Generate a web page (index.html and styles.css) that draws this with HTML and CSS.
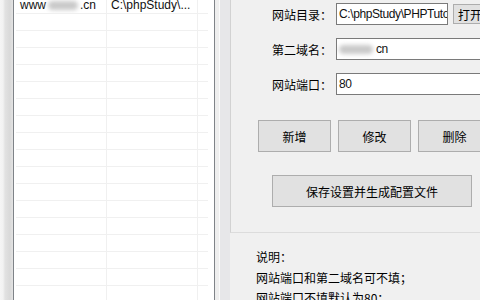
FILE: index.html
```html
<!DOCTYPE html>
<html lang="zh-CN">
<head>
  <meta charset="utf-8">
  <title>站点管理</title>
  <link rel="stylesheet" href="styles.css">
</head>
<body>
<div class="app">
  <div class="edge"></div>
  <div class="list">
    <div class="rows">
      <div class="row"><span class="cell c1">www<span class="blur"></span>.cn</span><span class="cell c2">C:\phpStudy\...</span><span class="cell c3"></span></div>
      <div class="row"><span class="cell c1"></span><span class="cell c2"></span><span class="cell c3"></span></div>
      <div class="row"><span class="cell c1"></span><span class="cell c2"></span><span class="cell c3"></span></div>
      <div class="row"><span class="cell c1"></span><span class="cell c2"></span><span class="cell c3"></span></div>
      <div class="row"><span class="cell c1"></span><span class="cell c2"></span><span class="cell c3"></span></div>
      <div class="row"><span class="cell c1"></span><span class="cell c2"></span><span class="cell c3"></span></div>
      <div class="row"><span class="cell c1"></span><span class="cell c2"></span><span class="cell c3"></span></div>
      <div class="row"><span class="cell c1"></span><span class="cell c2"></span><span class="cell c3"></span></div>
      <div class="row"><span class="cell c1"></span><span class="cell c2"></span><span class="cell c3"></span></div>
      <div class="row"><span class="cell c1"></span><span class="cell c2"></span><span class="cell c3"></span></div>
      <div class="row"><span class="cell c1"></span><span class="cell c2"></span><span class="cell c3"></span></div>
      <div class="row"><span class="cell c1"></span><span class="cell c2"></span><span class="cell c3"></span></div>
      <div class="row"><span class="cell c1"></span><span class="cell c2"></span><span class="cell c3"></span></div>
      <div class="row"><span class="cell c1"></span><span class="cell c2"></span><span class="cell c3"></span></div>
      <div class="row"><span class="cell c1"></span><span class="cell c2"></span><span class="cell c3"></span></div>
      <div class="row"><span class="cell c1"></span><span class="cell c2"></span><span class="cell c3"></span></div>
      <div class="row"><span class="cell c1"></span><span class="cell c2"></span><span class="cell c3"></span></div>
      <div class="row"><span class="cell c1"></span><span class="cell c2"></span><span class="cell c3"></span></div>
    </div>
  </div>
  <div class="track"></div>
  <div class="main">
    <div class="panel">
      <div class="field">
        <span class="label">网站目录：</span>
        <div class="textbox short">C:\phpStudy\PHPTutorial\WWW</div>
        <button class="btn open" type="button">打开</button>
      </div>
      <div class="field">
        <span class="label">第二域名：</span>
        <div class="textbox"><span class="blur wide"></span>cn</div>
      </div>
      <div class="field">
        <span class="label">网站端口：</span>
        <div class="textbox">80</div>
      </div>
      <div class="actions">
        <button class="btn act" type="button">新增</button>
        <button class="btn act" type="button">修改</button>
        <button class="btn act" type="button">删除</button>
      </div>
      <button class="btn save" type="button">保存设置并生成配置文件</button>
    </div>
    <div class="notes">
      <div>说明：</div>
      <div>网站端口和第二域名可不填；</div>
      <div>网站端口不填默认为80；</div>
    </div>
  </div>
</div>
</body>
</html>
```
FILE: styles.css
```css
body {
  margin: 0;
  background-color: #f0f0f0;
  color: #111;
  font-family: "Liberation Sans", "Noto Sans CJK SC", sans-serif;
  font-size: 12px;
}
.app {
  display: flex;
  width: 480px;
  height: 300px;
  overflow: hidden;
}
.edge {
  width: 13px;
  flex-shrink: 0;
  background: linear-gradient(to right, #f5f5f5 0, #f2f2f2 3px, #e2e2e2 5px, #d9d9d9 10px, #e4e4e4 13px);
}
.list {
  width: 200px;
  flex-shrink: 0;
  background-color: #fff;
  border-left: 1px solid #7f8388;
  border-right: 1px solid #7f8388;
  overflow: hidden;
}
.rows {
  margin: -3px 0 0 2px;
  width: 192px;
}
.row {
  display: flex;
  height: 16px;
  border-bottom: 1px solid #f0f0f0;
}
.cell {
  display: block;
  height: 16px;
  line-height: 16px;
  white-space: nowrap;
  overflow: hidden;
}
.c1, .c2 {
  width: 86px;
  padding-left: 4px;
  border-right: 1px solid #f0f0f0;
}
.c3 {
  width: 10px;
}
.blur {
  display: inline-block;
  width: 30px;
  height: 9px;
  margin: 0 2px;
  vertical-align: -1px;
  border-radius: 5px;
  background-color: #c9c9c9;
  filter: blur(2px);
}
.blur.wide {
  width: 34px;
  margin: 0 3px 0 0;
}
.track {
  width: 15px;
  flex-shrink: 0;
  background: linear-gradient(to right, #eeeeee 0 4px, #fbfbfb 4px 5px, #e7e7e9 5px 15px);
}
.main {
  width: 260px;
  flex-shrink: 0;
}
.panel {
  height: 229px;
  padding: 3px 0 0 27px;
  border-left: 1px solid #d2d2d2;
  border-bottom: 1px solid #dcdcdc;
}
.field {
  display: flex;
  align-items: center;
  height: 22px;
  margin-left: 14px;
  font-family: "Noto Sans CJK SC", sans-serif;
}
.field + .field {
  margin-top: 13px;
}
.label {
  width: 64px;
  flex-shrink: 0;
  color: #000;
}
.textbox {
  box-sizing: border-box;
  width: 160px;
  height: 22px;
  flex-shrink: 0;
  padding: 0 2px;
  line-height: 20px;
  border: 1px solid #7a7a7a;
  background-color: #fff;
  white-space: nowrap;
  overflow: hidden;
  letter-spacing: -0.4px;
  font-family: "Liberation Sans", sans-serif;
}
.textbox.short {
  width: 112px;
}
.btn {
  box-sizing: border-box;
  flex-shrink: 0;
  padding: 0;
  border: 1px solid #adadad;
  background-color: #e1e1e1;
  color: #000;
  font-family: "Noto Sans CJK SC", sans-serif;
  font-size: 12px;
}
.open {
  width: 40px;
  height: 20px;
  margin-left: 5px;
  text-align: left;
  padding-left: 4px;
}
.actions {
  display: flex;
  gap: 7px;
  margin-top: 25px;
}
.act {
  width: 73px;
  height: 32px;
}
.save {
  display: block;
  width: 200px;
  height: 32px;
  margin: 23px 0 0 14px;
}
.notes {
  padding: 14px 0 0 26px;
  line-height: 20.5px;
  color: #000;
  font-family: "Noto Sans CJK SC", sans-serif;
}
```
